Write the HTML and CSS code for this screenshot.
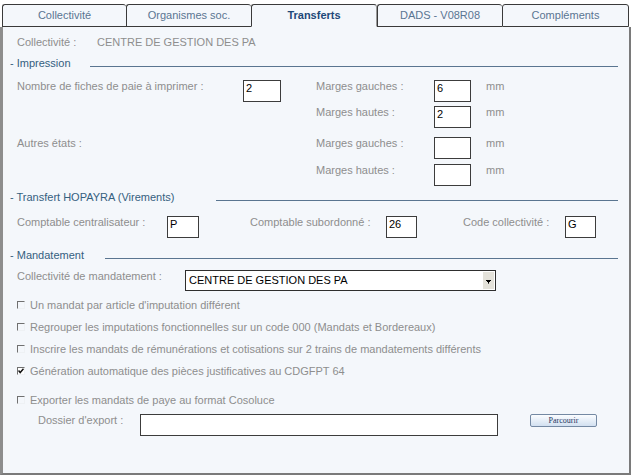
FILE: index.html
```html
<!DOCTYPE html>
<html lang="fr">
<head>
<meta charset="utf-8">
<title>Transferts</title>
<link rel="stylesheet" href="styles.css">
</head>
<body>
<div class="window">
  <div class="tabs">
    <div class="tab tab-1">Collectivité</div>
    <div class="tab tab-2">Organismes soc.</div>
    <div class="tab tab-3 active">Transferts</div>
    <div class="tab tab-4">DADS - V08R08</div>
    <div class="tab tab-5">Compléments</div>
  </div>
  <div class="panel">
    <div class="info">
      <span class="info-label">Collectivité :</span>
      <span class="info-value">CENTRE DE GESTION DES PA</span>
    </div>

    <div class="legend legend-imp">
      <span class="legend-text">- Impression</span>
      <span class="legend-line"></span>
    </div>
    <div class="print-grid">
      <span class="label">Nombre de fiches de paie à imprimer :</span>
      <span class="field w38">2</span>
      <span class="label">Marges gauches :</span>
      <span class="field w37">6</span>
      <span class="label">mm</span>

      <span class="label"></span>
      <span></span>
      <span class="label">Marges hautes :</span>
      <span class="field w37">2</span>
      <span class="label">mm</span>

      <span class="label">Autres états :</span>
      <span></span>
      <span class="label">Marges gauches :</span>
      <span class="field w37"></span>
      <span class="label">mm</span>

      <span class="label"></span>
      <span></span>
      <span class="label">Marges hautes :</span>
      <span class="field w37"></span>
      <span class="label">mm</span>
    </div>

    <div class="legend legend-trf">
      <span class="legend-text">- Transfert HOPAYRA (Virements)</span>
      <span class="legend-line"></span>
    </div>
    <div class="trf-row">
      <span class="label">Comptable centralisateur :</span>
      <span class="field w32">P</span>
      <span class="label">Comptable subordonné :</span>
      <span class="field w31">26</span>
      <span class="label">Code collectivité :</span>
      <span class="field w31">G</span>
    </div>

    <div class="legend legend-mdt">
      <span class="legend-text">- Mandatement</span>
      <span class="legend-line"></span>
    </div>
    <div class="select-row">
      <span class="label">Collectivité de mandatement :</span>
      <div class="select">
        <span class="select-value">CENTRE DE GESTION DES PA</span>
        <span class="select-arrow">
          <svg width="5" height="4" viewBox="0 0 5 4"><path d="M0 0H5V1H4V2H3V3H2V2H1V1H0Z" fill="#000"/><rect x="2" y="3" width="1" height="1" fill="#555"/></svg>
        </span>
      </div>
    </div>

    <div class="checks">
      <div class="check"><span class="cb"></span><span class="label">Un mandat par article d'imputation différent</span></div>
      <div class="check"><span class="cb"></span><span class="label">Regrouper les imputations fonctionnelles sur un code 000 (Mandats et Bordereaux)</span></div>
      <div class="check"><span class="cb"></span><span class="label">Inscrire les mandats de rémunérations et cotisations sur 2 trains de mandatements différents</span></div>
      <div class="check"><span class="cb checked"><svg width="6" height="6" viewBox="0 0 6 6"><path d="M0.5 2.5 L2.2 4.5 L5.5 0.8" fill="none" stroke="#111" stroke-width="1.5"/></svg></span><span class="label">Génération automatique des pièces justificatives au CDGFPT 64</span></div>
    </div>

    <div class="check export-check"><span class="cb"></span><span class="label">Exporter les mandats de paye au format Cosoluce</span></div>
    <div class="export-row">
      <span class="label export-label">Dossier d'export :</span>
      <span class="field w358"></span>
      <button class="browse" type="button">Parcourir</button>
    </div>
  </div>
</div>
</body>
</html>
```

FILE: styles.css
```css
* { box-sizing: border-box; }

html, body {
  margin: 0;
  padding: 0;
  background: #ffffff;
}

body {
  font-family: "Liberation Sans", Arial, sans-serif;
  font-size: 11px;
  line-height: 13px;
  color: #8e8e8e;
}

.window {
  width: 631px;
  height: 475px;
  padding-top: 4px;
}

/* Tabs */
.tabs {
  display: flex;
  padding-left: 2px;
  height: 23px;
}

.tab {
  height: 23px;
  padding-top: 4px;
  text-align: center;
  color: #5a7592;
  background: #f4f7fb;
  border-top: 1px solid #3a3a3a;
  border-left: 1px solid #3a3a3a;
  border-bottom: 1px solid #3a3a3a;
  border-radius: 3px 3px 0 0;
}

.tab-1 { width: 124px; }
.tab-2 { width: 125px; }
.tab-3 { width: 126px; }
.tab-4 { width: 125px; }
.tab-5 { width: 127px; border-right: 1px solid #3a3a3a; }

.tab.active {
  border-bottom-color: #f4f7fb;
  color: #1d4878;
  font-weight: bold;
  border-right: 1px solid #9a9a9a;
}

/* Panel */
.panel {
  height: 448px;
  background: #f4f7fb;
  border-left: 3px solid #8d8d8d;
  border-right: 2px solid #7a7a7a;
  border-bottom: 2px solid #7a7a7a;
  padding: 9px 11px 0 7px;
}

.info {
  display: flex;
  padding-left: 7px;
}

.info-label { width: 80px; }

/* Legends */
.legend {
  display: flex;
  align-items: flex-start;
  height: 13px;
  color: #35607f;
}

.legend-line {
  flex: 1;
  height: 1px;
  background: #5a7590;
  margin-top: 9px;
}

.legend-imp { margin-top: 8px; }
.legend-imp .legend-text { width: 80px; }

.legend-trf { margin-top: 5px; }
.legend-trf .legend-text { width: 206px; }

.legend-mdt { margin-top: 11px; }
.legend-mdt .legend-text { width: 95px; }

/* Fields */
.field {
  display: block;
  height: 22px;
  background: #ffffff;
  border: 1px solid #3c3c3c;
  color: #000000;
  padding: 1px 2px 0;
}

.w38 { width: 38px; }
.w37 { width: 37px; }
.w32 { width: 32px; }
.w31 { width: 31px; }
.w358 { width: 358px; }

.label { white-space: nowrap; }

/* Impression grid */
.print-grid {
  display: grid;
  grid-template-columns: 226px 73px 118px 52px auto;
  grid-template-rows: 26px 31px 27px 22px;
  margin-top: 10px;
  padding-left: 7px;
  align-items: start;
}

/* Transfert row */
.trf-row {
  display: grid;
  grid-template-columns: 150px 83px 136px 77px 102px 31px;
  margin-top: 12px;
  padding-left: 7px;
  align-items: start;
}

/* Select row */
.select-row {
  display: flex;
  align-items: flex-start;
  margin-top: 8px;
  padding-left: 7px;
}

.select-row .label {
  width: 168px;
  padding-top: 0;
}

.select {
  display: flex;
  width: 311px;
  height: 21px;
  background: #ffffff;
  border: 1px solid #2e2e2e;
}

.select-value {
  flex: 1;
  color: #000000;
  padding: 3px 0 0 3px;
}

.select-arrow {
  width: 11px;
  margin: 1px 1px 1px 0;
  background: #e4e2da;
  display: flex;
  align-items: center;
  justify-content: center;
  padding-top: 2px;
}

/* Checkboxes */
.checks {
  margin-top: 3px;
  padding-left: 7px;
}

.check {
  display: flex;
  align-items: center;
  height: 22px;
}

.cb {
  display: flex;
  align-items: center;
  justify-content: center;
  width: 8px;
  height: 8px;
  margin-right: 5px;
  border-top: 1px solid #707070;
  border-left: 1px solid #707070;
  border-right: 1px solid #eef1f4;
  border-bottom: 1px solid #eef1f4;
  background: #f4f7fb;
}

.cb.checked { background: #ffffff; }

.export-check {
  margin-top: 7px;
  padding-left: 7px;
}

/* Export row */
.export-row {
  display: flex;
  align-items: flex-start;
  margin-top: 3px;
  padding-left: 28px;
}

.export-label {
  width: 102px;
  padding-top: 0;
}

.browse {
  margin-left: 32px;
  width: 67px;
  height: 13px;
  padding: 0;
  border: 1px solid #7489a3;
  border-radius: 2px;
  background: linear-gradient(#fbfdff, #d2e0f0);
  font-family: "Liberation Serif", "Times New Roman", serif;
  font-size: 8px;
  line-height: 11px;
  color: #1b3563;
}
```
